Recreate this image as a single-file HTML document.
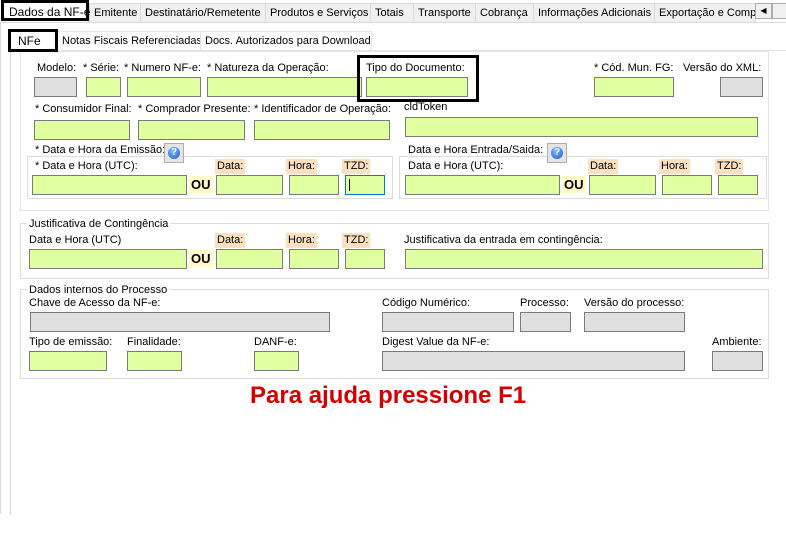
<!DOCTYPE html>
<html><head><meta charset="utf-8"><style>
*{margin:0;padding:0;box-sizing:border-box}
body{width:786px;height:535px;background:#fff;position:relative;overflow:hidden;font-family:"Liberation Sans",Arial,sans-serif;font-size:11px;color:#000}
.a{position:absolute;white-space:nowrap}
.t{position:absolute;top:3px;height:19px;background:#f0f0f0;border:1px solid #d9d9d9;border-bottom:none;padding:3px 0 0 4px;white-space:nowrap;overflow:hidden}
.g{position:absolute;background:#e0ffa0;border:1px solid #7a7a7a}
.gr{position:absolute;background:#e0e0e0;border:1px solid #7a7a7a}
.box{position:absolute;border:1px solid #dcdcdc}
.lg{position:absolute;background:#fff;padding:0 2px;white-space:nowrap}
.or{position:absolute;background:#fce0bf;padding:0 2px;height:15px;line-height:15px}
.ou{position:absolute;background:#fff8c8;font-weight:bold;font-size:13px;padding:0 2px;height:17px;line-height:17px}
.blk{position:absolute;border:3px solid #000}
.hb{position:absolute;width:20px;height:20px;background:#e4e4e4;border:1px solid #adadad}
.hb span{position:absolute;left:3px;top:3px;width:12px;height:12px;border-radius:50%;background:radial-gradient(circle at 40% 35%,#7fb4ff,#1a5fd0);color:#fff;font-size:10px;font-weight:bold;line-height:12px;text-align:center}
</style></head><body>
<div class="a" style="left:0;top:22px;width:786px;height:1px;background:#d9d9d9"></div>
<div class="a" style="left:0;top:22px;width:1px;height:492px;background:#d9d9d9"></div>
<div class="a" style="left:10px;top:50px;width:1px;height:464px;background:#d9d9d9"></div>
<div class="a" style="left:10px;top:50px;width:776px;height:1px;background:#e3e3e3"></div>
<div class="box" style="left:20px;top:51px;width:749px;height:160px;border-color:#e3e3e3"></div>

<div class="t" style="left:89px;width:52px">Emitente</div>
<div class="t" style="left:140px;width:126px">Destinatário/Remetente</div>
<div class="t" style="left:265px;width:106px">Produtos e Serviços</div>
<div class="t" style="left:370px;width:44px">Totais</div>
<div class="t" style="left:413px;width:63px">Transporte</div>
<div class="t" style="left:475px;width:59px">Cobrança</div>
<div class="t" style="left:533px;width:122px">Informações Adicionais</div>
<div class="t" style="left:654px;width:102px">Exportação e Compr</div>
<div class="a" style="left:755px;top:3px;width:17px;height:16px;background:#f0f0f0;border:1px solid #adadad;font-size:8px;text-align:center;line-height:14px">◀</div>
<div class="a" style="left:772px;top:3px;width:17px;height:16px;background:#f0f0f0;border:1px solid #adadad"></div>
<div class="a" style="left:1px;top:0;width:88px;height:21px;border:3px solid #000;background:#fff;padding:2px 0 0 5px;font-size:12px">Dados da NF-e</div>

<div class="t" style="left:57px;top:31px;width:144px;background:#fff;border-color:#e3e3e3">Notas Fiscais Referenciadas</div>
<div class="t" style="left:200px;top:31px;width:172px;background:#fff;border-color:#e3e3e3">Docs. Autorizados para Download</div>
<div class="a" style="left:8px;top:29px;width:50px;height:23px;border:3px solid #000;background:#fff;padding:2px 0 0 7px;font-size:12px">NFe</div>

<div class="a" style="left:37px;top:62px">Modelo:</div>
<div class="a" style="left:83px;top:62px">* Série:</div>
<div class="a" style="left:124px;top:62px">* Numero NF-e:</div>
<div class="a" style="left:207px;top:62px">* Natureza da Operação:</div>
<div class="a" style="left:366px;top:62px">Tipo do Documento:</div>
<div class="a" style="left:594px;top:62px">* Cód. Mun. FG:</div>
<div class="a" style="left:683px;top:62px">Versão do XML:</div>
<div class="gr" style="left:34px;top:77px;width:43px;height:20px"></div>
<div class="g" style="left:86px;top:77px;width:35px;height:20px"></div>
<div class="g" style="left:127px;top:77px;width:74px;height:20px"></div>
<div class="g" style="left:207px;top:77px;width:155px;height:20px"></div>
<div class="g" style="left:366px;top:77px;width:102px;height:20px"></div>
<div class="g" style="left:594px;top:77px;width:80px;height:20px"></div>
<div class="gr" style="left:720px;top:77px;width:43px;height:20px"></div>
<div class="blk" style="left:357px;top:55px;width:122px;height:47px"></div>

<div class="a" style="left:35px;top:103px">* Consumidor Final:</div>
<div class="a" style="left:138px;top:103px">* Comprador Presente:</div>
<div class="a" style="left:254px;top:103px">* Identificador de Operação:</div>
<div class="a" style="left:404px;top:101px">cldToken</div>
<div class="g" style="left:34px;top:120px;width:96px;height:20px"></div>
<div class="g" style="left:138px;top:120px;width:107px;height:20px"></div>
<div class="g" style="left:254px;top:120px;width:136px;height:20px"></div>
<div class="g" style="left:405px;top:117px;width:353px;height:20px"></div>

<div class="box" style="left:27px;top:156px;width:366px;height:43px"></div>
<div class="lg" style="left:33px;top:144px">* Data e Hora da Emissão:</div>
<div class="hb" style="left:164px;top:143px"><span>?</span></div>
<div class="a" style="left:35px;top:160px">* Data e Hora (UTC):</div>
<div class="or" style="left:215px;top:159px">Data:</div>
<div class="or" style="left:286px;top:159px">Hora:</div>
<div class="or" style="left:342px;top:159px">TZD:</div>
<div class="g" style="left:32px;top:175px;width:155px;height:20px"></div>
<div class="ou" style="left:189px;top:176px">OU</div>
<div class="g" style="left:216px;top:175px;width:67px;height:20px"></div>
<div class="g" style="left:289px;top:175px;width:50px;height:20px"></div>
<div class="g" style="left:345px;top:175px;width:40px;height:20px;border-color:#0078d7"><div style="position:absolute;left:3px;top:3px;width:1px;height:12px;background:#000"></div></div>

<div class="box" style="left:399px;top:156px;width:368px;height:43px"></div>
<div class="lg" style="left:406px;top:144px">Data e Hora Entrada/Saida:</div>
<div class="hb" style="left:547px;top:143px"><span>?</span></div>
<div class="a" style="left:408px;top:160px">Data e Hora (UTC):</div>
<div class="or" style="left:588px;top:159px">Data:</div>
<div class="or" style="left:659px;top:159px">Hora:</div>
<div class="or" style="left:715px;top:159px">TZD:</div>
<div class="g" style="left:405px;top:175px;width:155px;height:20px"></div>
<div class="ou" style="left:562px;top:176px">OU</div>
<div class="g" style="left:589px;top:175px;width:67px;height:20px"></div>
<div class="g" style="left:662px;top:175px;width:50px;height:20px"></div>
<div class="g" style="left:718px;top:175px;width:40px;height:20px"></div>

<div class="box" style="left:20px;top:223px;width:749px;height:56px"></div>
<div class="lg" style="left:27px;top:218px">Justificativa de Contingência</div>
<div class="a" style="left:29px;top:234px">Data e Hora (UTC)</div>
<div class="or" style="left:215px;top:233px">Data:</div>
<div class="or" style="left:286px;top:233px">Hora:</div>
<div class="or" style="left:342px;top:233px">TZD:</div>
<div class="a" style="left:404px;top:234px">Justificativa da entrada em contingência:</div>
<div class="g" style="left:29px;top:249px;width:158px;height:20px"></div>
<div class="ou" style="left:189px;top:250px">OU</div>
<div class="g" style="left:216px;top:249px;width:67px;height:20px"></div>
<div class="g" style="left:289px;top:249px;width:50px;height:20px"></div>
<div class="g" style="left:345px;top:249px;width:40px;height:20px"></div>
<div class="g" style="left:405px;top:249px;width:358px;height:20px"></div>

<div class="box" style="left:20px;top:289px;width:749px;height:90px"></div>
<div class="lg" style="left:27px;top:284px">Dados internos do Processo</div>
<div class="a" style="left:29px;top:297px">Chave de Acesso da NF-e:</div>
<div class="a" style="left:382px;top:297px">Código Numérico:</div>
<div class="a" style="left:520px;top:297px">Processo:</div>
<div class="a" style="left:584px;top:297px">Versão do processo:</div>
<div class="gr" style="left:30px;top:312px;width:300px;height:20px"></div>
<div class="gr" style="left:382px;top:312px;width:132px;height:20px"></div>
<div class="gr" style="left:520px;top:312px;width:51px;height:20px"></div>
<div class="gr" style="left:584px;top:312px;width:101px;height:20px"></div>
<div class="a" style="left:29px;top:336px">Tipo de emissão:</div>
<div class="a" style="left:127px;top:336px">Finalidade:</div>
<div class="a" style="left:254px;top:336px">DANF-e:</div>
<div class="a" style="left:382px;top:336px">Digest Value da NF-e:</div>
<div class="a" style="left:712px;top:336px">Ambiente:</div>
<div class="g" style="left:29px;top:351px;width:78px;height:20px"></div>
<div class="g" style="left:127px;top:351px;width:55px;height:20px"></div>
<div class="g" style="left:254px;top:351px;width:45px;height:20px"></div>
<div class="gr" style="left:382px;top:351px;width:303px;height:20px"></div>
<div class="gr" style="left:712px;top:351px;width:51px;height:20px"></div>

<div class="a" style="left:250px;top:382px;color:#d40000;font-size:24px;font-weight:bold">Para ajuda pressione F1</div>
</body></html>
